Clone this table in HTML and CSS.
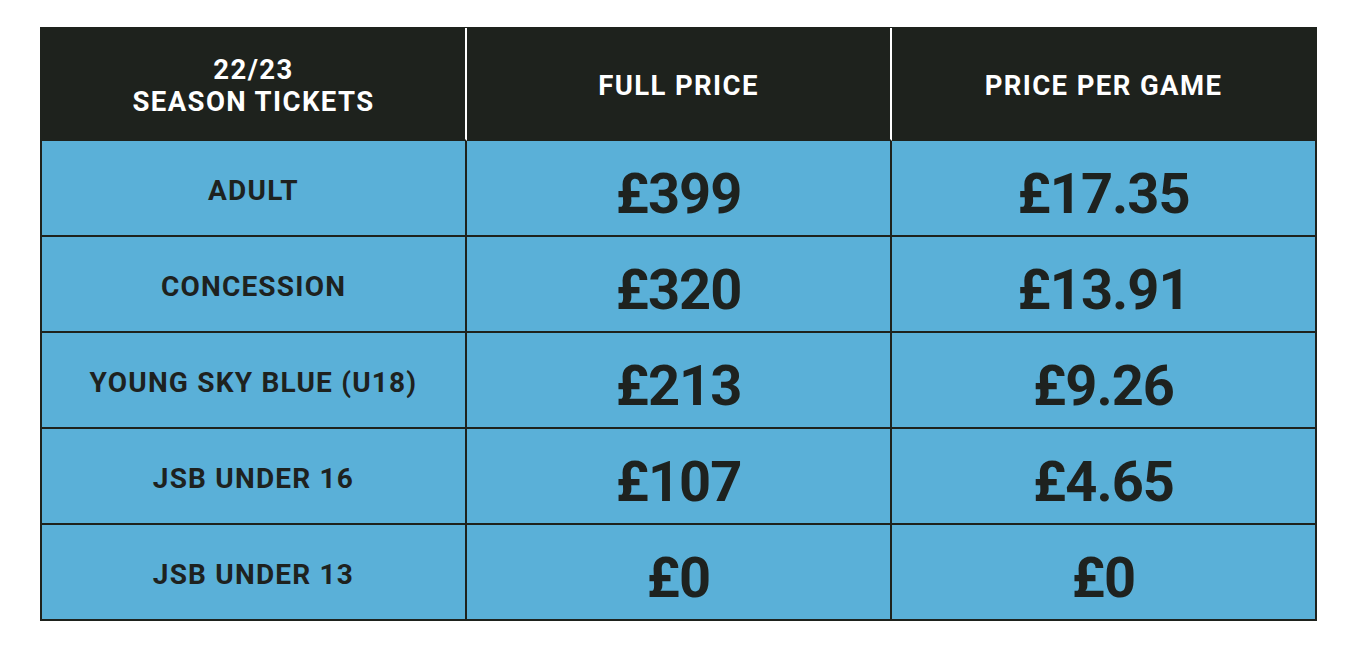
FILE: index.html
```html
<!DOCTYPE html>
<html lang="en">
<head>
<meta charset="utf-8">
<title>22/23 Season Tickets</title>
<link rel="stylesheet" href="styles.css">
</head>
<body>
<div class="table">
  <div class="cell head">22/23<br>SEASON TICKETS</div>
  <div class="cell head">FULL PRICE</div>
  <div class="cell head last">PRICE PER GAME</div>

  <div class="cell label">ADULT</div>
  <div class="cell price">£399</div>
  <div class="cell price">£17.35</div>

  <div class="cell label">CONCESSION</div>
  <div class="cell price">£320</div>
  <div class="cell price">£13.91</div>

  <div class="cell label">YOUNG SKY BLUE (U18)</div>
  <div class="cell price">£213</div>
  <div class="cell price">£9.26</div>

  <div class="cell label">JSB UNDER 16</div>
  <div class="cell price">£107</div>
  <div class="cell price">£4.65</div>

  <div class="cell label">JSB UNDER 13</div>
  <div class="cell price">£0</div>
  <div class="cell price">£0</div>
</div>
</body>
</html>
```

FILE: styles.css
```css
html, body {
  margin: 0;
  padding: 0;
  background: #ffffff;
}

body {
  padding: 27px 0 0 40px;
  font-family: Roboto, "Liberation Sans", sans-serif;
  color: #1e221f;
}

.table {
  width: 1277px;
  display: grid;
  grid-template-columns: 425px 425px 425px;
  grid-template-rows: 113px repeat(5, 96px);
  border-left: 2px solid #1e221d;
  border-top: 1px solid #1e221d;
  box-sizing: border-box;
}

.cell {
  display: flex;
  align-items: center;
  justify-content: center;
  text-align: center;
  background: #5ab0d8;
  border-right: 2px solid #1e221d;
  border-bottom: 2px solid #1e221d;
  box-sizing: border-box;
  padding-top: 4px;
}

.head {
  background: #1e221d;
  color: #ffffff;
  font-weight: 700;
  font-size: 27.5px;
  line-height: 32px;
  letter-spacing: 1.4px;
  border-right: 2px solid #ffffff;
  padding-top: 4px;
}

.head.last {
  border-right-color: #1e221d;
}

.label {
  font-weight: 700;
  font-size: 28px;
  letter-spacing: 1.2px;
}

.price {
  font-weight: 700;
  font-size: 56px;
  letter-spacing: -1px;
  padding-top: 11px;
}
```
